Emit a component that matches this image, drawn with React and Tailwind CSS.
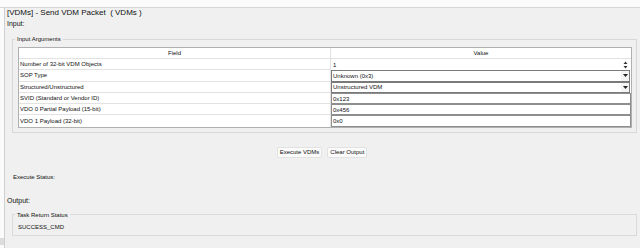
import React from 'react';

const rows = [
  { label: 'Number of 32-bit VDM Objects', value: '1', kind: 'spin' },
  { label: 'SOP Type', value: 'Unknown (0x3)', kind: 'select' },
  { label: 'Structured/Unstructured', value: 'Unstructured VDM', kind: 'select' },
  { label: 'SVID (Standard or Vendor ID)', value: '0x123', kind: 'text' },
  { label: 'VDO 0 Partial Payload (15-bit)', value: '0x456', kind: 'text' },
  { label: 'VDO 1 Payload (32-bit)', value: '0x0', kind: 'text' },
];

const SpinArrows = () => (
  <svg width="5" height="8" viewBox="0 0 5 8" className="shrink-0">
    <path d="M2.5 0.5 L4.5 3 L0.5 3 Z" fill="#333" />
    <path d="M0.5 5 L4.5 5 L2.5 7.5 Z" fill="#333" />
  </svg>
);

const DropArrow = () => (
  <div className="h-full w-[8px] flex items-center justify-center bg-[#f4f4f4]">
    <svg width="5" height="3" viewBox="0 0 5 3">
      <path d="M0 0 L5 0 L2.5 3 Z" fill="#222" />
    </svg>
  </div>
);

const ValueCell = ({ value, kind }) => {
  if (kind === 'spin') {
    return (
      <div className="h-full flex items-center justify-between pl-[2px] pr-[3px] bg-white">
        <span>{value}</span>
        <SpinArrows />
      </div>
    );
  }
  if (kind === 'select') {
    return (
      <div className="h-full mr-[1px] flex items-center justify-between pl-[1px] border border-[#7a7a7a] bg-white">
        <span>{value}</span>
        <DropArrow />
      </div>
    );
  }
  return (
    <div className="h-full flex items-center pl-[1px] border border-[#8e8e8e] bg-white">
      <span>{value}</span>
    </div>
  );
};

export default function App() {
  return (
    <div className="w-[640px] h-[248px] overflow-hidden bg-[#f0f0f0] text-[#111] font-['Liberation_Sans',Arial,sans-serif] flex flex-col">
      <div className="h-[8px] shrink-0 bg-[#fbfbfb] border-b border-[#d6d6d6]" />
      <div className="flex flex-1">
        <div className="w-[5px] shrink-0 bg-[#fbfbfb] border-r border-[#d0d0d0] flex flex-col justify-end pb-[3px]">
          <div className="h-[7px] w-[4px] bg-[#dcdcdc]" />
        </div>
        <div className="flex-1 pl-[2px] flex flex-col">
          <div className="text-[8px] leading-[10px]">[VDMs] - Send VDM Packet &nbsp;( VDMs )</div>
          <div className="mt-[2px] text-[7px] leading-[8px]">Input:</div>

          <fieldset className="mt-[7px] ml-[5px] mr-[3px] border border-[#d8d8d8]">
            <legend className="ml-[2px] px-[2px] text-[6px] leading-[8px]">Input Arguments</legend>
            <div className="pt-[4px] pb-[4px] pl-[5px] pr-[4px]">
              <div className="border border-[#b0b0b0] bg-white text-[6px] leading-[8px]">
                <div className="grid grid-cols-[312px_1fr] h-[11px]">
                  <div className="flex items-center justify-center border-r border-b border-[#e2e2e2]">Field</div>
                  <div className="flex items-center justify-center border-b border-[#e2e2e2]">Value</div>
                </div>
                {rows.map((r, i) => (
                  <div key={i} className="grid grid-cols-[312px_1fr] h-[11.3px]">
                    <div className={`flex items-center pl-[1px] border-r border-[#e2e2e2] ${i < rows.length - 1 ? 'border-b' : ''}`}>
                      {r.label}
                    </div>
                    <ValueCell value={r.value} kind={r.kind} />
                  </div>
                ))}
              </div>
            </div>
          </fieldset>

          <div className="mt-[14px] flex justify-center gap-[5px] pr-[3px] text-[6px] leading-[8px]">
            <button className="h-[11px] px-[2px] whitespace-nowrap rounded-[2px] border border-[#e2e2e2] bg-[#fbfbfb]">Execute VDMs</button>
            <button className="h-[11px] px-[2px] whitespace-nowrap rounded-[2px] border border-[#e2e2e2] bg-[#fbfbfb]">Clear Output</button>
          </div>

          <div className="mt-[15px] ml-[6px] text-[6px] leading-[8px]">Execute Status:</div>
          <div className="mt-[16px] text-[7px] leading-[8px]">Output:</div>

          <fieldset className="mt-[6px] ml-[5px] mr-[3px] border border-[#dadada]">
            <legend className="ml-[2px] px-[2px] text-[6px] leading-[8px]">Task Return Status</legend>
            <div className="pt-[4px] pb-[4px] pl-[5px] text-[6px] leading-[8px]">SUCCESS_CMD</div>
          </fieldset>
        </div>
      </div>
    </div>
  );
}
